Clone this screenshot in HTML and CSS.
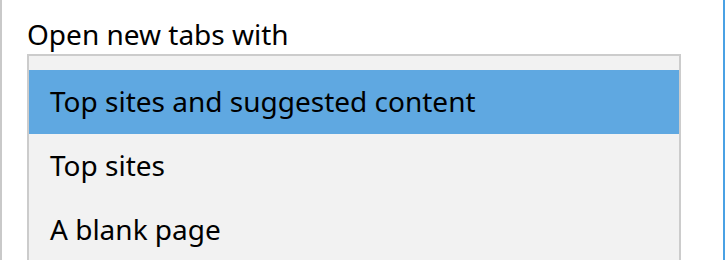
FILE: index.html
```html
<!DOCTYPE html>
<html lang="en">
<head>
  <meta charset="UTF-8">
  <title>Open new tabs with</title>
  <link rel="stylesheet" href="styles.css">
</head>
<body>
  <div class="pane">
    <label class="field-label" for="newTabList">Open new tabs with</label>
    <div class="listbox" id="newTabList" role="listbox">
      <div class="option selected" role="option">Top sites and suggested content</div>
      <div class="option" role="option">Top sites</div>
      <div class="option" role="option">A blank page</div>
    </div>
  </div>
</body>
</html>
```
FILE: styles.css
```css
html, body {
  margin: 0;
  background: #fff;
  overflow: hidden;
}
body {
  font-family: "Noto Sans", "Open Sans", sans-serif;
  color: #000;
}
.pane {
  box-sizing: border-box;
  height: 260px;
  width: 725px;
  border-left: 2px solid #c9c9c9;
  border-right: 2px solid #4aa1e4;
  padding: 15px 0 0 25px;
}
.field-label {
  display: block;
  font-size: 28px;
  line-height: 38px;
  height: 39px;
}
.listbox {
  width: 654px;
  box-sizing: border-box;
  border: 2px solid #cccccc;
  border-bottom: none;
  background: #f2f2f2;
  padding-top: 14px;
}
.option {
  height: 64px;
  line-height: 62px;
  padding-left: 21px;
  font-size: 28px;
}
.option.selected {
  background: #5fa8e1;
}
```
